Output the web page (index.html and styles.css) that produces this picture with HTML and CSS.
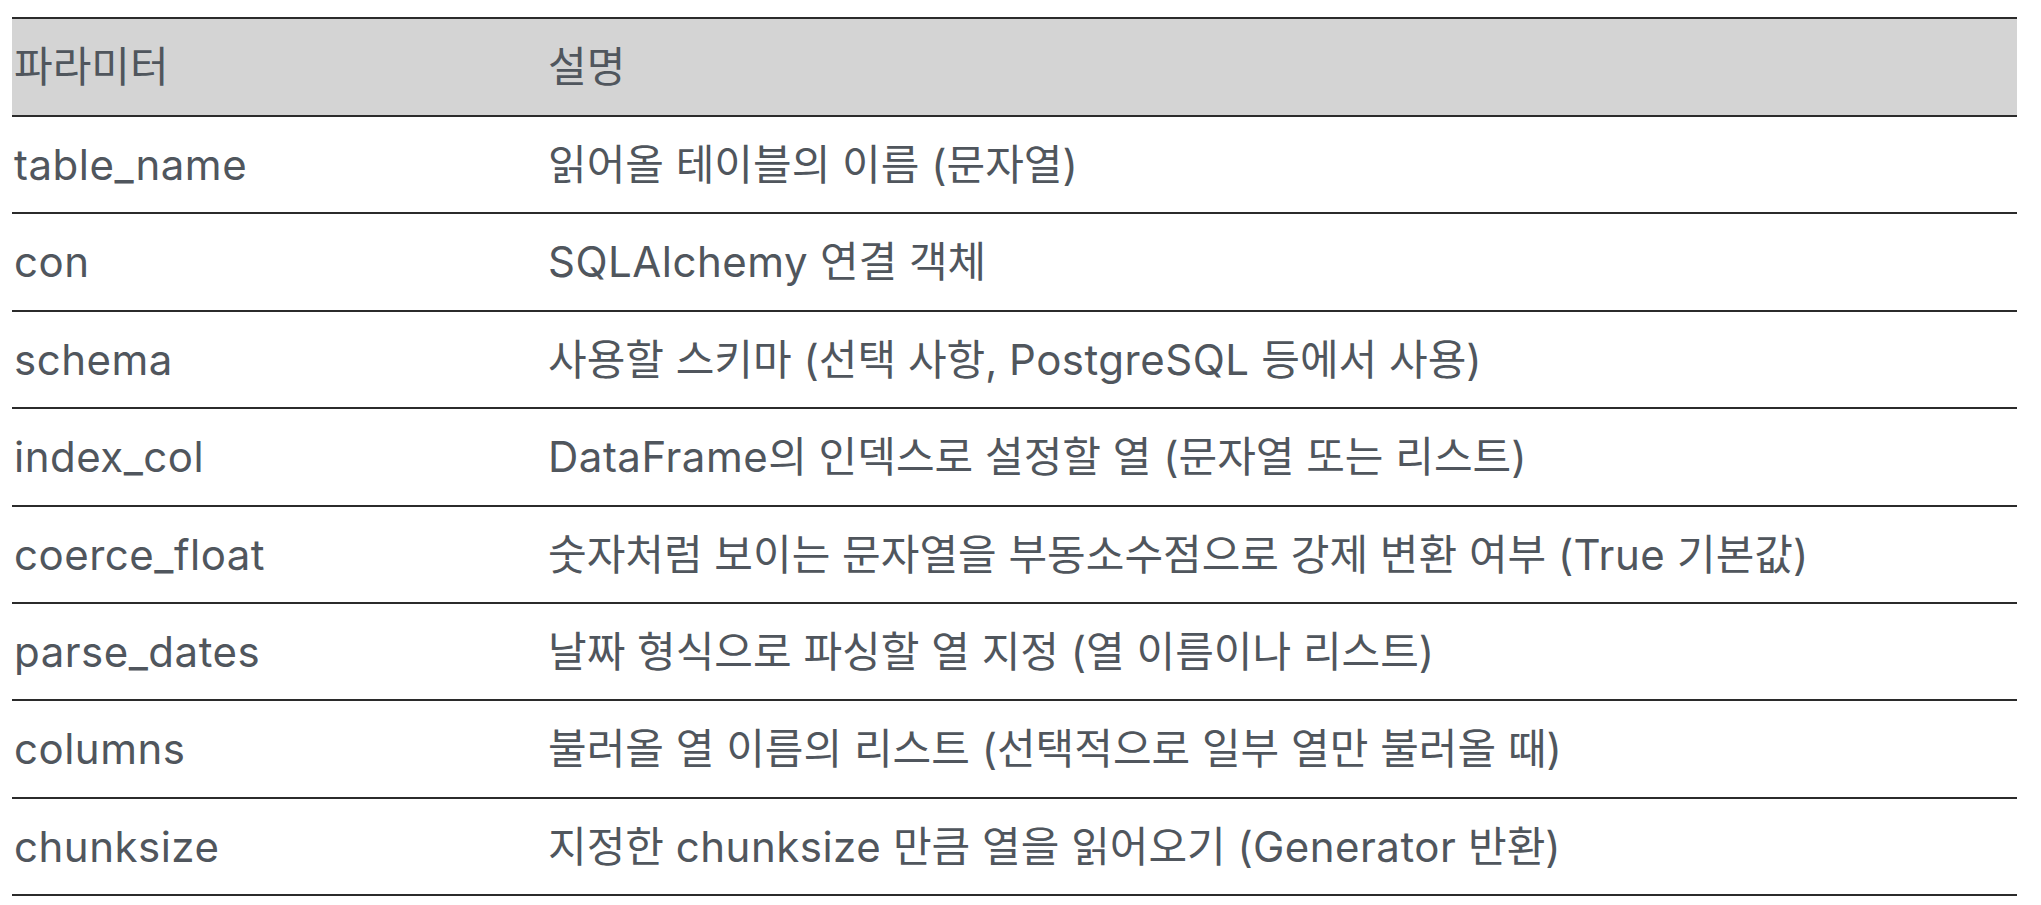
FILE: index.html
```html
<!DOCTYPE html>
<html lang="ko">
<head>
<meta charset="utf-8">
<title>파라미터</title>
<link rel="stylesheet" href="styles.css">
</head>
<body>
<table class="params">
  <thead>
    <tr><th class="col-name">파라미터</th><th>설명</th></tr>
  </thead>
  <tbody>
    <tr><td class="name">table_name</td><td>읽어올 테이블의 이름 (문자열)</td></tr>
    <tr><td class="name">con</td><td><span class="lt">SQLAlchemy</span> 연결 객체</td></tr>
    <tr><td class="name">schema</td><td>사용할 스키마 (선택 사항, <span class="lt">PostgreSQL</span> 등에서 사용)</td></tr>
    <tr><td class="name">index_col</td><td><span class="lt">DataFrame</span>의 인덱스로 설정할 열 (문자열 또는 리스트)</td></tr>
    <tr><td class="name">coerce_float</td><td>숫자처럼 보이는 문자열을 부동소수점으로 강제 변환 여부 (<span class="lt">True</span> 기본값)</td></tr>
    <tr><td class="name">parse_dates</td><td>날짜 형식으로 파싱할 열 지정 (열 이름이나 리스트)</td></tr>
    <tr><td class="name">columns</td><td>불러올 열 이름의 리스트 (선택적으로 일부 열만 불러올 때)</td></tr>
    <tr><td class="name">chunksize</td><td>지정한 <span class="lt">chunksize</span> 만큼 열을 읽어오기 (<span class="lt">Generator</span> 반환)</td></tr>
  </tbody>
</table>
</body>
</html>
```
FILE: styles.css
```css
html, body {
  margin: 0;
  padding: 0;
  background: #ffffff;
}

body {
  padding: 17px 0 0 12px;
  font-family: Inter, "Noto Sans CJK KR", sans-serif;
  font-optical-sizing: none;
  font-variation-settings: "opsz" 21;
  color: #50565d;
}

.params {
  width: 2005px;
  table-layout: fixed;
  border-collapse: separate;
  border-spacing: 0;
  border-top: 2px solid #2b2b2b;
  font-size: 42px;
}

.params th,
.params td {
  text-align: left;
  font-weight: 400;
  padding: 24px 2px 23.4px 2px;
  line-height: 48px;
  border-bottom: 2px solid #2b2b2b;
  white-space: nowrap;
  vertical-align: middle;
}

.params thead th {
  background: #d4d4d4;
  padding-top: 24px;
  padding-bottom: 24px;
}

.params .col-name {
  width: 530px;
}

.params .name,
.params .lt {
  letter-spacing: 0.5px;
}
```
